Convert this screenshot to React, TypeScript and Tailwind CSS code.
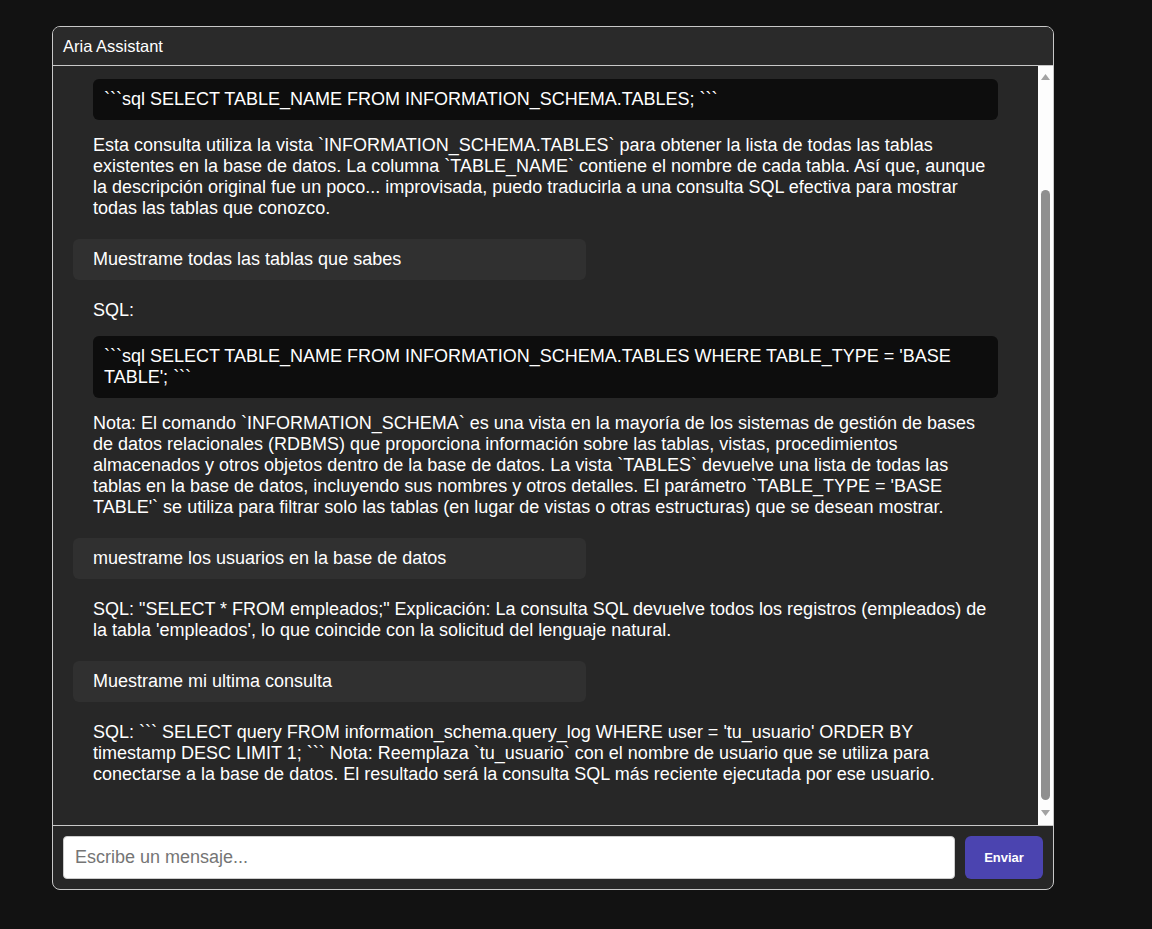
type Msg =
  | { role: 'user'; text: string }
  | { role: 'bot'; blocks: { kind: 'p' | 'code'; text: string }[] };

const messages: Msg[] = [
  {
    role: 'bot',
    blocks: [
      { kind: 'code', text: "```sql SELECT TABLE_NAME FROM INFORMATION_SCHEMA.TABLES; ```" },
      {
        kind: 'p',
        text: 'Esta consulta utiliza la vista `INFORMATION_SCHEMA.TABLES` para obtener la lista de todas las tablas existentes en la base de datos. La columna `TABLE_NAME` contiene el nombre de cada tabla. Así que, aunque la descripción original fue un poco... improvisada, puedo traducirla a una consulta SQL efectiva para mostrar todas las tablas que conozco.',
      },
    ],
  },
  { role: 'user', text: 'Muestrame todas las tablas que sabes' },
  {
    role: 'bot',
    blocks: [
      { kind: 'p', text: 'SQL:' },
      {
        kind: 'code',
        text: "```sql SELECT TABLE_NAME FROM INFORMATION_SCHEMA.TABLES WHERE TABLE_TYPE = 'BASE TABLE'; ```",
      },
      {
        kind: 'p',
        text: "Nota: El comando `INFORMATION_SCHEMA` es una vista en la mayoría de los sistemas de gestión de bases de datos relacionales (RDBMS) que proporciona información sobre las tablas, vistas, procedimientos almacenados y otros objetos dentro de la base de datos. La vista `TABLES` devuelve una lista de todas las tablas en la base de datos, incluyendo sus nombres y otros detalles. El parámetro `TABLE_TYPE = 'BASE TABLE'` se utiliza para filtrar solo las tablas (en lugar de vistas o otras estructuras) que se desean mostrar.",
      },
    ],
  },
  { role: 'user', text: 'muestrame los usuarios en la base de datos' },
  {
    role: 'bot',
    blocks: [
      {
        kind: 'p',
        text: "SQL: \"SELECT * FROM empleados;\" Explicación: La consulta SQL devuelve todos los registros (empleados) de la tabla 'empleados', lo que coincide con la solicitud del lenguaje natural.",
      },
    ],
  },
  { role: 'user', text: 'Muestrame mi ultima consulta' },
  {
    role: 'bot',
    blocks: [
      {
        kind: 'p',
        text: "SQL: ``` SELECT query FROM information_schema.query_log WHERE user = 'tu_usuario' ORDER BY timestamp DESC LIMIT 1; ``` Nota: Reemplaza `tu_usuario` con el nombre de usuario que se utiliza para conectarse a la base de datos. El resultado será la consulta SQL más reciente ejecutada por ese usuario.",
      },
    ],
  },
];

// the list is shown scrolled to the bottom, so the bar is drawn
const ScrollBar = () => (
  <div className="w-[15px] shrink-0 bg-[#fdfdfd] flex flex-col items-center">
    <svg width="9" height="6" viewBox="0 0 9 6" className="mt-[8px]">
      <path d="M4.5 0L9 6H0z" fill="#a3a3a3" />
    </svg>
    <div className="mt-[110px] w-[9px] h-[610px] rounded-full bg-[#8f8f8f]" />
    <svg width="9" height="6" viewBox="0 0 9 6" className="mt-[10px]">
      <path d="M0 0h9L4.5 6z" fill="#a3a3a3" />
    </svg>
  </div>
);

export default function App() {
  return (
    <div
      className="min-h-screen bg-[#121212] pt-[26px] pl-[52px] text-white"
      style={{ fontFamily: '"Liberation Sans", Arial, sans-serif' }}
    >
      <div className="w-[1002px] h-[864px] flex flex-col rounded-lg border border-[#c8c8c8] bg-[#272727] overflow-hidden">
        <div className="h-[39px] shrink-0 flex items-center px-[10px] bg-[#2a2a2a] border-b border-[#c8c8c8] text-[16.5px]">
          Aria Assistant
        </div>

        <div className="flex-1 min-h-0 flex">
          <div className="flex-1 min-w-0 overflow-hidden flex flex-col justify-end gap-[10px] px-[20px] pb-[30px] text-[18px] leading-[21px]">
            {messages.map((m, i) =>
              m.role === 'user' ? (
                <div key={i} className="w-[513px] shrink-0 rounded-md bg-[#303030] px-[20px] py-[10px]">
                  {m.text}
                </div>
              ) : (
                <div key={i} className="shrink-0 flex flex-col gap-[15px] px-[20px] py-[10px]">
                  {m.blocks.map((b, j) =>
                    b.kind === 'code' ? (
                      <div key={j} className="rounded-md bg-[#0d0d0d] px-[11px] py-[10px]">
                        {b.text}
                      </div>
                    ) : (
                      <p key={j}>{b.text}</p>
                    )
                  )}
                </div>
              )
            )}
          </div>
          <ScrollBar />
        </div>

        <div className="shrink-0 flex gap-[10px] p-[10px] border-t border-[#c8c8c8]">
          <input
            placeholder="Escribe un mensaje..."
            className="flex-1 h-[43px] rounded bg-white border border-[#ccc] px-[11px] text-[18px] text-black placeholder:text-[#757575] outline-none"
          />
          <button className="w-[78px] h-[43px] rounded-md bg-[#4b44b0] text-white text-[13px] font-bold">
            Enviar
          </button>
        </div>
      </div>
    </div>
  );
}
